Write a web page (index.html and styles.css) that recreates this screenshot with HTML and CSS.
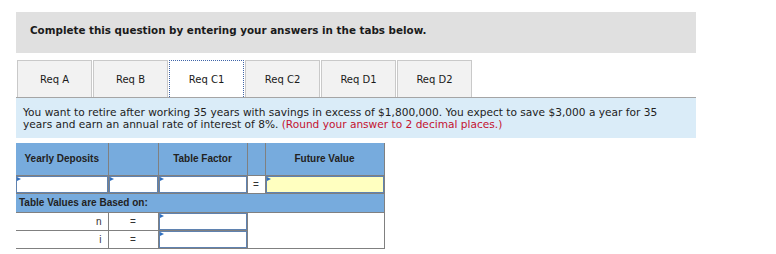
FILE: index.html
```html
<!DOCTYPE html>
<html lang="en">
<head>
    <meta charset="UTF-8">
    <meta name="viewport" content="width=device-width, initial-scale=1.0">
    <title>Req C1</title>
    <link rel="stylesheet" href="styles.css">
</head>
<body>
    <div class="page">
        <div class="instructions">Complete this question by entering your answers in the tabs below.</div>

        <div class="tabs">
            <button class="tab">Req A</button>
            <button class="tab">Req B</button>
            <button class="tab active">Req C1</button>
            <button class="tab">Req C2</button>
            <button class="tab">Req D1</button>
            <button class="tab">Req D2</button>
        </div>

        <div class="question">
            You want to retire after working 35 years with savings in excess of $1,800,000. You expect to save $3,000 a year for 35 years and earn an annual rate of interest of 8%.
            <span class="hint">(Round your answer to 2 decimal places.)</span>
        </div>

        <table class="worksheet">
            <colgroup>
                <col class="c1">
                <col class="c2">
                <col class="c3">
                <col class="c4">
                <col class="c5">
            </colgroup>
            <tr class="head">
                <th>Yearly Deposits</th>
                <th></th>
                <th>Table Factor</th>
                <th></th>
                <th>Future Value</th>
            </tr>
            <tr class="inputs">
                <td class="entry"><input type="text"></td>
                <td class="entry"><input type="text"></td>
                <td class="entry"><input type="text"></td>
                <td class="eq">=</td>
                <td class="entry answer"><input type="text"></td>
            </tr>
            <tr class="section">
                <td colspan="5">Table Values are Based on:</td>
            </tr>
            <tr class="param">
                <td class="label">n</td>
                <td class="eq">=</td>
                <td class="entry"><input type="text"></td>
                <td class="blank" colspan="2" rowspan="2"></td>
            </tr>
            <tr class="param">
                <td class="label">i</td>
                <td class="eq">=</td>
                <td class="entry"><input type="text"></td>
            </tr>
        </table>
    </div>
</body>
</html>
```

FILE: styles.css
```css
* {
    margin: 0;
    padding: 0;
    box-sizing: border-box;
}

body {
    font-family: "DejaVu Sans", Verdana, sans-serif;
    font-size: 10px;
    color: #1a1a1a;
    background: #fff;
}

.page {
    width: 696px;
    padding: 12px 0 0 16px;
}

/* instructions bar */
.instructions {
    height: 41px;
    padding: 11px 0 0 14px;
    background-color: #e0e0e0;
    font-size: 10.35px;
    font-weight: bold;
    line-height: 14px;
}

/* tabs */
.tabs {
    display: flex;
    gap: 1px;
    margin-top: 7px;
    padding-left: 1px;
}

.tab {
    width: 75px;
    height: 37px;
    background-color: #f2f2f2;
    border: 1px solid #c9c9c9;
    border-bottom: none;
    font-family: "DejaVu Sans", Verdana, sans-serif;
    font-size: 10px;
    color: #1a1a1a;
}

.tab.active {
    background-color: #fff;
    border: 1px dotted #3f64a8;
    border-bottom: none;
}

/* question text */
.question {
    height: 41px;
    padding: 8px 30px 0 7px;
    background-color: #daecf8;
    border-top: 1px solid #a5a5a5;
    font-size: 10.6px;
    line-height: 12px;
    color: #222;
}

.hint {
    color: #c41230;
}

/* worksheet table */
.worksheet {
    margin-top: 5px;
    width: 368px;
    border-collapse: collapse;
    table-layout: fixed;
    font-family: "Liberation Sans", Arial, sans-serif;
    font-size: 10px;
}

.c1 { width: 92px; }
.c2 { width: 50px; }
.c3 { width: 89px; }
.c4 { width: 18px; }
.c5 { width: 119px; }

.worksheet td,
.worksheet th {
    border-right: 1px solid #808080;
    border-bottom: 1px solid #808080;
    padding: 0;
}

.head th {
    height: 32px;
    background-color: #77abdd;
    font-weight: bold;
    color: #222;
    text-align: center;
}

.inputs td {
    height: 18px;
    background-color: #77abdd;
}

.entry {
    position: relative;
    padding: 0;
}

.entry input {
    display: block;
    width: 100%;
    height: 17px;
    border: 1px solid #5f82b0;
    background-color: #fff;
    outline: none;
}

.answer input {
    background-color: #ffffc0;
}

/* small blue marker in the corner of each field */
.entry::before {
    content: "";
    position: absolute;
    top: 1px;
    left: 1px;
    border-left: 4px solid #2f6fc0;
    border-top: 2px solid transparent;
    border-bottom: 2px solid transparent;
}

.worksheet .eq {
    background-color: #fff;
    text-align: center;
    color: #333;
}

.section td {
    height: 19px;
    padding-left: 3px;
    background-color: #77abdd;
    font-weight: bold;
    color: #222;
}

.param td {
    height: 18px;
    background-color: #fff;
}

.param .label {
    text-align: right;
    padding-right: 6px;
    color: #333;
}

.param .blank {
    background-color: #fff;
}
```
